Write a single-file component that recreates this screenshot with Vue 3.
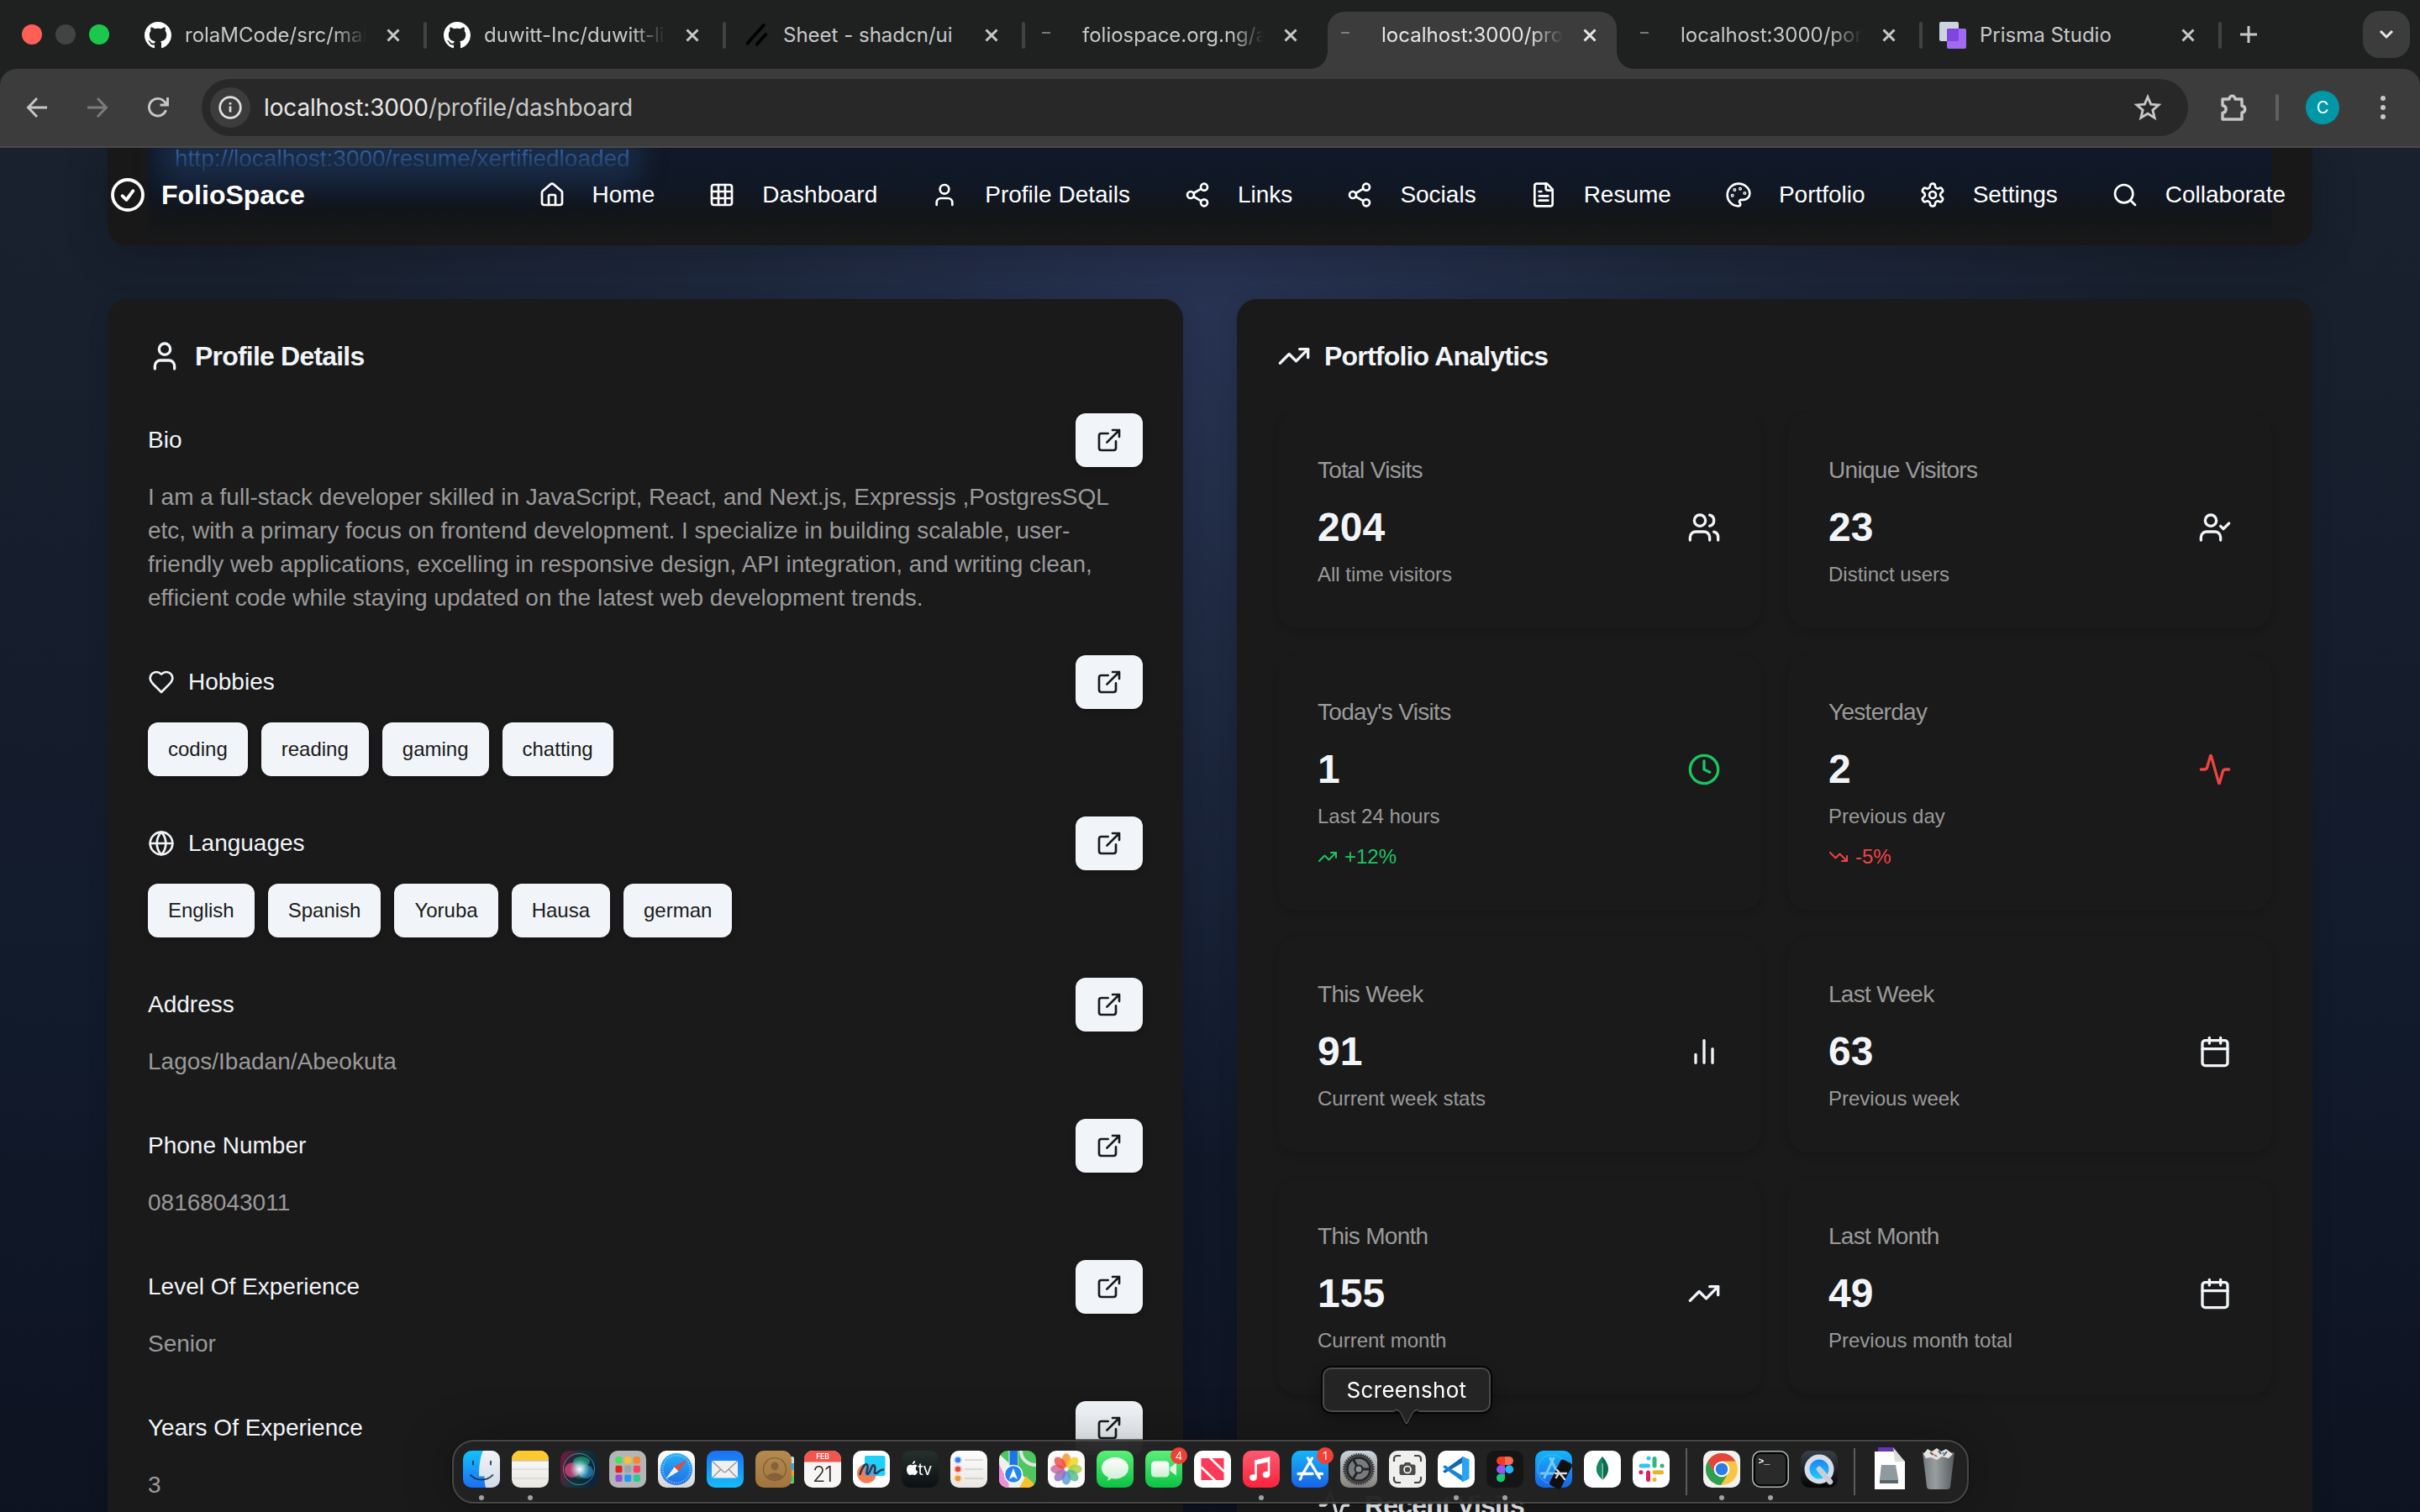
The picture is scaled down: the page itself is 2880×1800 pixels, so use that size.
<script setup>
const lucide = {
  home: '<path d="M15 21v-8a1 1 0 0 0-1-1h-4a1 1 0 0 0-1 1v8"/><path d="M3 10a2 2 0 0 1 .709-1.528l7-5.999a2 2 0 0 1 2.582 0l7 5.999A2 2 0 0 1 21 10v9a2 2 0 0 1-2 2H5a2 2 0 0 1-2-2z"/>',
  grid: '<rect width="18" height="18" x="3" y="3" rx="2"/><path d="M3 9h18M3 15h18M9 3v18M15 3v18"/>',
  user: '<path d="M19 21v-2a4 4 0 0 0-4-4H9a4 4 0 0 0-4 4v2"/><circle cx="12" cy="7" r="4"/>',
  share: '<circle cx="18" cy="5" r="3"/><circle cx="6" cy="12" r="3"/><circle cx="18" cy="19" r="3"/><path d="m8.59 13.51 6.83 3.98M15.41 6.51l-6.82 3.98"/>',
  file: '<path d="M15 2H6a2 2 0 0 0-2 2v16a2 2 0 0 0 2 2h12a2 2 0 0 0 2-2V7Z"/><path d="M14 2v4a2 2 0 0 0 2 2h4M10 9H8M16 13H8M16 17H8"/>',
  palette: '<circle cx="13.5" cy="6.5" r=".5"/><circle cx="17.5" cy="10.5" r=".5"/><circle cx="8.5" cy="7.5" r=".5"/><circle cx="6.5" cy="12.5" r=".5"/><path d="M12 2C6.5 2 2 6.5 2 12s4.5 10 10 10c.926 0 1.648-.746 1.648-1.688 0-.437-.18-.835-.437-1.125-.29-.289-.438-.652-.438-1.125a1.64 1.64 0 0 1 1.668-1.668h1.996c3.051 0 5.555-2.503 5.555-5.554C21.965 6.012 17.461 2 12 2z"/>',
  settings: '<path d="M12.22 2h-.44a2 2 0 0 0-2 2v.18a2 2 0 0 1-1 1.73l-.43.25a2 2 0 0 1-2 0l-.15-.08a2 2 0 0 0-2.73.73l-.22.38a2 2 0 0 0 .73 2.73l.15.1a2 2 0 0 1 1 1.72v.51a2 2 0 0 1-1 1.74l-.15.09a2 2 0 0 0-.73 2.73l.22.38a2 2 0 0 0 2.73.73l.15-.08a2 2 0 0 1 2 0l.43.25a2 2 0 0 1 1 1.73V20a2 2 0 0 0 2 2h.44a2 2 0 0 0 2-2v-.18a2 2 0 0 1 1-1.73l.43-.25a2 2 0 0 1 2 0l.15.08a2 2 0 0 0 2.73-.73l.22-.39a2 2 0 0 0-.73-2.73l-.15-.08a2 2 0 0 1-1-1.74v-.5a2 2 0 0 1 1-1.74l.15-.09a2 2 0 0 0 .73-2.73l-.22-.38a2 2 0 0 0-2.73-.73l-.15.08a2 2 0 0 1-2 0l-.43-.25a2 2 0 0 1-1-1.73V4a2 2 0 0 0-2-2z"/><circle cx="12" cy="12" r="3"/>',
  search: '<circle cx="11" cy="11" r="8"/><path d="m21 21-4.3-4.3"/>',
  link: '<path d="M15 3h6v6M10 14 21 3M18 13v6a2 2 0 0 1-2 2H5a2 2 0 0 1-2-2V8a2 2 0 0 1 2-2h6"/>',
  heart: '<path d="M19 14c1.49-1.46 3-3.21 3-5.5A5.5 5.5 0 0 0 16.5 3c-1.76 0-3 .5-4.5 2-1.5-1.5-2.74-2-4.5-2A5.5 5.5 0 0 0 2 8.5c0 2.3 1.5 4.05 3 5.5l7 7Z"/>',
  globe: '<circle cx="12" cy="12" r="10"/><path d="M12 2a14.5 14.5 0 0 0 0 20 14.5 14.5 0 0 0 0-20M2 12h20"/>',
  up: '<path d="m22 7-8.5 8.5-5-5L2 17"/><path d="M16 7h6v6"/>',
  down: '<path d="m22 17-8.5-8.5-5 5L2 7"/><path d="M16 17h6v-6"/>',
  users: '<path d="M16 21v-2a4 4 0 0 0-4-4H6a4 4 0 0 0-4 4v2"/><circle cx="9" cy="7" r="4"/><path d="M22 21v-2a4 4 0 0 0-3-3.87M16 3.13a4 4 0 0 1 0 7.75"/>',
  usercheck: '<path d="M16 21v-2a4 4 0 0 0-4-4H6a4 4 0 0 0-4 4v2"/><circle cx="9" cy="7" r="4"/><path d="m16 11 2 2 4-4"/>',
  clock: '<circle cx="12" cy="12" r="10"/><path d="M12 6v6l4 2"/>',
  activity: '<path d="M22 12h-2.48a2 2 0 0 0-1.93 1.46l-2.35 8.36a.25.25 0 0 1-.48 0L9.24 2.18a.25.25 0 0 0-.48 0l-2.35 8.36A2 2 0 0 1 4.49 12H2"/>',
  bars: '<path d="M18 20V10M12 20V4M6 20v-6"/>',
  calendar: '<path d="M8 2v4M16 2v4"/><rect width="18" height="18" x="3" y="4" rx="2"/><path d="M3 10h18"/>',
}

const github = '<path fill="#fff" d="M8 0C3.58 0 0 3.58 0 8c0 3.54 2.29 6.53 5.47 7.59.4.07.55-.17.55-.38 0-.19-.01-.82-.01-1.49-2.01.37-2.53-.49-2.69-.94-.09-.23-.48-.94-.82-1.13-.28-.15-.68-.52-.01-.53.63-.01 1.08.58 1.23.82.72 1.21 1.87.87 2.33.66.07-.52.28-.87.51-1.07-1.78-.2-3.64-.89-3.64-3.95 0-.87.31-1.59.82-2.15-.08-.2-.36-1.02.08-2.12 0 0 .67-.21 2.2.82.64-.18 1.32-.27 2-.27s1.36.09 2 .27c1.53-1.04 2.2-.82 2.2-.82.44 1.1.16 1.92.08 2.12.51.56.82 1.27.82 2.15 0 3.07-1.87 3.75-3.65 3.95.29.25.54.73.54 1.48 0 1.07-.01 1.93-.01 2.2 0 .21.15.46.55.38A8.01 8.01 0 0 0 16 8c0-4.42-3.58-8-8-8z"/>'
const slashes = '<path d="M2.800 12.800 12.400 2M8.400 13.400l5.200-5.900" stroke="#000" stroke-width="1.900" stroke-linecap="round"/>'
const dash = '<path d="M0 6.500h5" stroke="#8d8f98" stroke-width=".8"/>'
const prisma = '<rect width="11.500" height="11.500" rx="1" fill="#cad5e0"/><rect x="4.500" y="4" width="11.500" height="12" rx="1" fill="#9f6bf0"/><path d="M4.500 5a1 1 0 0 1 1-1h6v6.500a1 1 0 0 1-1 1h-6z" fill="#7f45dc"/>'

const tabs = [
  { title: 'rolaMCode/src/main', icon: github, sep: true, fade: true },
  { title: 'duwitt-Inc/duwitt-li', icon: github, sep: true, fade: true },
  { title: 'Sheet - shadcn/ui', icon: slashes, sep: true },
  { title: 'foliospace.org.ng/a', icon: dash, fade: true },
  { title: 'localhost:3000/pro', icon: dash, active: true, fade: true },
  { title: 'localhost:3000/por', icon: dash, sep: true, fade: true },
  { title: 'Prisma Studio', icon: prisma, sep: true },
]

const nav = [
  ['Home', 'home'], ['Dashboard', 'grid'], ['Profile Details', 'user'], ['Links', 'share'],
  ['Socials', 'share'], ['Resume', 'file'], ['Portfolio', 'palette'], ['Settings', 'settings'], ['Collaborate', 'search'],
]

const sections = [
  { title: 'Bio', text: 'I am a full-stack developer skilled in JavaScript, React, and Next.js, Expressjs ,PostgresSQL etc, with a primary focus on frontend development. I specialize in building scalable, user-friendly web applications, excelling in responsive design, API integration, and writing clean, efficient code while staying updated on the latest web development trends.' },
  { title: 'Hobbies', icon: 'heart', chips: ['coding', 'reading', 'gaming', 'chatting'] },
  { title: 'Languages', icon: 'globe', chips: ['English', 'Spanish', 'Yoruba', 'Hausa', 'german'] },
  { title: 'Address', text: 'Lagos/Ibadan/Abeokuta' },
  { title: 'Phone Number', text: '08168043011' },
  { title: 'Level Of Experience', text: 'Senior' },
  { title: 'Years Of Experience', text: '3' },
]

const stats = [
  { title: 'Total Visits', value: '204', sub: 'All time visitors', icon: 'users' },
  { title: 'Unique Visitors', value: '23', sub: 'Distinct users', icon: 'usercheck' },
  { title: "Today's Visits", value: '1', sub: 'Last 24 hours', icon: 'clock', tone: 'green', trend: '+12%', dir: 'up' },
  { title: 'Yesterday', value: '2', sub: 'Previous day', icon: 'activity', tone: 'red', trend: '-5%', dir: 'down' },
  { title: 'This Week', value: '91', sub: 'Current week stats', icon: 'bars' },
  { title: 'Last Week', value: '63', sub: 'Previous week', icon: 'calendar' },
  { title: 'This Month', value: '155', sub: 'Current month', icon: 'up' },
  { title: 'Last Month', value: '49', sub: 'Previous month total', icon: 'calendar' },
]

const tile = (fill) => `<rect width="44" height="44" rx="10" fill="${fill}"/>`
const padColors = ['#4be05a', '#fbc02d', '#f7882a', '#e0241c', '#9aa4aa', '#ff3f5f', '#9a4bd8', '#1c9cf6', '#2fc995']
const pad = padColors.map((c, i) => `<rect x="${7.5 + (i % 3) * 10.7}" y="${7 + Math.floor(i / 3) * 10.8}" width="8" height="8.4" rx="2" fill="${c}"/>`).join('')
const petals = ['#f7941d', '#f2cf1d', '#a8cf3c', '#4fb98a', '#5a9bd8', '#8a6fc0', '#c9649a', '#f0493e']
  .map((c, i) => `<ellipse cx="22" cy="11.5" rx="5.4" ry="8.3" fill="${c}" fill-opacity=".82" transform="rotate(${i * 45} 22 22)"/>`).join('')
const ticks = Array.from({ length: 36 }, (_, i) => `<path d="M22 4.6v2" stroke="#cfe8fb" stroke-width=".7" transform="rotate(${i * 10} 22 22)"/>`).join('')
const teeth = Array.from({ length: 40 }, (_, i) => `<path d="M22 3v3" stroke="#333" stroke-width="1.4" transform="rotate(${i * 9} 22 22)"/>`).join('')

const dockMain = [
  { dot: true, art: tile('url(#g-finder)') + '<path d="M24 0h10a10 10 0 0 1 10 10v24a10 10 0 0 1-10 10h-7c-1.200-5-1.500-9-1.500-13.500h-6.500C19 18 20.500 7 24 0z" fill="url(#g-face)"/><path d="M12 12.500v4M33 12.500v4M9 29c7 7.500 19 7.500 26.500 0" stroke="#1d2b3e" stroke-width="1.700" fill="none" stroke-linecap="round"/>' },
  { dot: true, art: tile('url(#g-paper)') + '<path d="M0 11.500V10A10 10 0 0 1 10 0h24a10 10 0 0 1 10 10v1.500z" fill="#fdc92e"/><path d="M0 12h44" stroke="#b9a878"/><path d="M0 22h44M0 33h44" stroke="#d2d0cb"/>' },
  { art: tile('url(#g-siri)') + '<circle cx="22" cy="22" r="18.500" fill="#0b2636" fill-opacity=".4" stroke="#7fa8a8" stroke-opacity=".7"/><ellipse cx="14" cy="23" rx="9" ry="9" fill="#e8407f" fill-opacity=".75"/><ellipse cx="30" cy="25" rx="9" ry="8" fill="#2b9be0" fill-opacity=".6"/><ellipse cx="25" cy="13" rx="10" ry="6" fill="#2ccf9a" fill-opacity=".5"/><circle cx="23" cy="22" r="12" fill="url(#g-glow)"/>' },
  { art: tile('#b3b5b7') + pad },
  { art: tile('url(#g-white)') + '<circle cx="22" cy="22" r="19" fill="url(#g-safari)"/>' + ticks + '<path d="M35 10 24.500 24.500 19.500 19.500z" fill="#f0443c"/><path d="M9 34 19.500 19.500l5 5z" fill="#f4f4f4"/>' },
  { art: tile('url(#g-mail)') + '<rect x="6" y="12" width="31" height="20.500" rx="2" fill="#f0f0ef"/><path d="m7 13 13 12q1.500 1.300 3 0L36 13M7 32l10-10M36 32 26 22" fill="none" stroke="#8c9093" stroke-width="1.100"/>' },
  { art: '<rect x="38" y="7" width="8" height="32" rx="2" fill="#d8d8d8"/><path d="M38 15h8v8h-8z" fill="#2fa8e8"/><path d="M38 23h8v7h-8z" fill="#f29b38"/><path d="M38 30h8v8h-8z" fill="#4ccc5c"/><rect width="43" height="44" rx="10" fill="url(#g-book)"/><circle cx="23" cy="22" r="13.500" fill="none" stroke="#7e5c2e" stroke-width="1.200"/><ellipse cx="23" cy="18.500" rx="4.500" ry="5" fill="#85623a"/><path d="M13.500 31c3-6 16-6 19 0a13.500 13.500 0 0 1-19 0z" fill="#85623a"/>' },
  { art: tile('#f7f6f4') + '<path d="M0 13.500V10A10 10 0 0 1 10 0h24a10 10 0 0 1 10 10v3.500z" fill="#f0564d"/><text x="22" y="10.400" font-size="8.500" font-weight="600" text-anchor="middle" fill="#fff" font-family="Inter, sans-serif">FEB</text><text x="21.500" y="36.500" font-size="25" font-weight="300" letter-spacing="-1" text-anchor="middle" fill="#2a2a2a" font-family="Inter, sans-serif">21</text>' },
  { art: tile('#fff') + '<circle cx="16.500" cy="27" r="11.500" fill="#f97a50"/><rect x="14" y="6" width="24.500" height="24" rx="2" fill="#20d0f7"/><path d="M14 16h14v12a11 11 0 0 1-11 2h-3z" fill="#6f9fc0"/><path d="M8.500 28c4-12 8-14 9-10s-3 10 0 10 5-14 8-10-2 9 1.500 9 3-4 9-4.500" fill="none" stroke="#153c60" stroke-width="2.400" stroke-linecap="round"/>' },
  { art: tile('url(#g-tv)') + '<path d="M15.800 16.500c1.600 0 2.300.8 2.800 1.500-2.700 1.800-2.200 5.800.7 6.800-.8 2.400-2.500 4.400-4 4.200-1-.2-1.400-.6-2.600-.6s-1.700.5-2.700.6C7.500 29 5.800 24.700 6 22c.2-3.400 2.300-5.200 4.500-5.200 1.100 0 2 .7 2.800.7.700 0 1.600-1 2.500-1z" fill="#fff"/><path d="M12.800 16c0-2.200 1.700-3.900 3.400-4 .2 2.100-1.500 4-3.400 4z" fill="#fff"/><text x="19.500" y="28.500" font-size="19" fill="#fff" font-family="Inter, sans-serif" letter-spacing="-.6">tv</text>' },
  { art: tile('url(#g-paper)') + [['#2f80f6', 11], ['#e8453c', 22], ['#f2962c', 33]].map(([c, y]) => `<circle cx="9" cy="${y}" r="3.300" fill="${c}"/><circle cx="9" cy="${y}" r="4.400" fill="none" stroke="${c}" stroke-opacity=".4" stroke-width=".8"/><path d="M17 ${y}h22" stroke="#bcbcba" stroke-width="1"/>`).join('') },
  { art: '<g clip-path="url(#clip-tile)"><rect width="44" height="44" fill="#4fc75f"/><path d="M0 4 44 44H0z" fill="#f0eff0"/><path d="M0 16v28h14z" fill="#ee8fd8"/><path d="M24 44 32 30l12 12v2z" fill="#f7c02e"/><path d="M11.500 0h11v44h-11z" fill="#eef0f2"/><path d="M12.500 0h9.500v20h-9.500z" fill="#1c74e8"/><path d="M26 0c0 10 8 17 18 17" fill="none" stroke="#e2e4e6" stroke-width="4"/></g><circle cx="17" cy="28" r="10.500" fill="#2484f2" stroke="#fff" stroke-width="1.400"/><path d="m17 21 5 13-5-3-5 3z" fill="#fff"/>' },
  { art: tile('#fbfbfb') + petals },
  { art: tile('url(#g-green)') + '<path d="M22 8c9 0 16 5.600 16 12.700S31 33.500 22 33.500c-1.600 0-3-.2-4.400-.5-1.300 1.500-3.300 2.600-5.300 2.700 1-1 1.600-2.400 1.700-4C9 29.200 6 25.400 6 20.700 6 13.600 13 8 22 8z" fill="url(#g-bubble)"/>' },
  { badge: '4', art: tile('url(#g-green)') + '<rect x="7" y="12.500" width="21.500" height="19" rx="4.500" fill="url(#g-bubble)"/><path d="M29.500 20 37 14.500v15L29.500 24z" fill="#e8f4ea"/>' },
  { art: tile('#fff') + '<rect x="8.500" y="9" width="27" height="26" fill="#fb3958"/><path d="M8.500 19.500 25 35.500M19 8.500l17 16.500" stroke="#fff" stroke-width="2.600"/>' },
  { dot: true, art: tile('url(#g-music)') + '<path d="M15.500 31V12.500L31 9v18.500" fill="none" stroke="#fff" stroke-width="2.600"/><path d="M14.500 11.500 32 7.500v5.500l-17.500 4z" fill="#fff"/><ellipse cx="12.500" cy="32" rx="4.300" ry="3.700" fill="#fff"/><ellipse cx="28" cy="28.500" rx="4.300" ry="3.700" fill="#fff"/>' },
  { badge: '1', art: tile('url(#g-store)') + '<path d="m24.500 9-12 20M19.500 9l14 23.500M8 27.500h17M30 27.500h6.500M11.500 32l-1.200 2" stroke="#fff" stroke-width="3.300" stroke-linecap="round"/>' },
  { art: tile('url(#g-set)') + '<circle cx="22" cy="22" r="17.500" fill="#4a4d50"/>' + teeth + '<circle cx="22" cy="22" r="13.500" fill="#777b7e" stroke="#232527" stroke-width="2.400"/><path d="M22 22h13M22 22l-6.500 11.500M22 22 15.500 10.500" stroke="#232527" stroke-width="3"/><circle cx="22" cy="22" r="4.500" fill="#8d9194" stroke="#232527" stroke-width="2"/>' },
  { art: tile('#efefed') + '<path d="M6 13V9.500A3.500 3.500 0 0 1 9.500 6H14M30 6h4.500A3.500 3.500 0 0 1 38 9.500V13M38 31v3.500a3.500 3.500 0 0 1-3.500 3.500H30M14 38H9.500A3.500 3.500 0 0 1 6 34.500V31" fill="none" stroke="#464646" stroke-width="2.200"/><path d="M14.500 16.500h3l1.500-2.500h6l1.500 2.500h3a2 2 0 0 1 2 2V27a2 2 0 0 1-2 2h-15a2 2 0 0 1-2-2v-8.500a2 2 0 0 1 2-2z" fill="#4a4a4a"/><circle cx="22" cy="22.500" r="4" fill="none" stroke="#fff" stroke-width="1.600"/>' },
  { dot: true, art: tile('#fff') + '<path d="M30 7 9 25.500l-3-2.300v-2.500L8.500 19 30 37z" fill="none"/><path d="m6 24.500 2.500 2.300L30 14V7z" fill="#1267ad"/><path d="m6 19.500 2.500-2.300L30 30v7z" fill="#1a86d2"/><path d="m29 6.500 8.500 4v23l-8.500 4z" fill="#2aa3f0"/>' },
  { dot: true, art: tile('#151515') + '<path d="M17 7h5v10h-5a5 5 0 0 1 0-10z" fill="#f23a24"/><path d="M22 7h5a5 5 0 0 1 0 10h-5z" fill="#fb6b4f"/><path d="M17 17.200h5v10h-5a5 5 0 0 1 0-10z" fill="#9a53f8"/><circle cx="27.200" cy="22.200" r="5" fill="#20b4f8"/><path d="M17 27.400h5v5a5 5 0 1 1-5-5z" fill="#17c772"/>' },
  { art: tile('url(#g-store)') + '<circle cx="20" cy="22" r="17" fill="none" stroke="#5cc3ff" stroke-opacity=".7"/><path d="m22 9-11 23M18 9l10 20M7 27h20" stroke="#8fd4ff" stroke-width="3" stroke-opacity=".8" stroke-linecap="round"/><rect x="23" y="11" width="15" height="34" rx="3" fill="#0f0f10" transform="rotate(27 30 28)"/><path d="m26 23 9 11M24 27h13M28 27l-3 5" stroke="#d8dade" stroke-width="2.400" stroke-linecap="round"/>' },
  { art: tile('#fff') + '<path d="M22 7c5 5.500 7 10.500 7 15s-2.500 9-6.500 12.500C18 31 15 27 15 22S17.500 12 22 7z" fill="#0b6b4c"/><path d="M22 7c-4.500 5-7 10-7 15s3 9 7 12z" fill="#148a5c"/><path d="M22.200 15v21" stroke="#cfe0d6" stroke-width="1"/>' },
  { art: tile('#fff') + '<g stroke-width="5" stroke-linecap="round"><path d="M19 9v.1M10 18h8.500" stroke="#36c5f0"/><path d="M26 9.500V18M35 18h.1" stroke="#2eb67d"/><path d="M26 25.700h8.500M26 34.500v.1" stroke="#ecb22e"/><path d="M18.500 26v8.500M9.800 25.700h.1" stroke="#e01e5a"/></g>' },
]
const dockRecent = [
  { dot: true, art: tile('#f2f2f0') + '<circle cx="22" cy="22" r="19" fill="#f9c642"/><path d="M5.500 12.500A19 19 0 0 1 38.500 12.500H22l-8.500 14z" fill="#e5443a"/><path d="M5.500 12.500A19 19 0 0 0 21 41l9.500-15.500-8.500 5-8-4z" fill="#2f9e4f"/><circle cx="22" cy="22" r="9.300" fill="#fff"/><circle cx="22" cy="22" r="7.300" fill="#2d7de9"/>' },
  { dot: true, art: '<rect x=".8" y=".8" width="42.400" height="42.400" rx="9.500" fill="#040404" stroke="#a9b5b8" stroke-width="1.600"/><rect x="4" y="4" width="36" height="36" rx="6" fill="#2a2a2b"/><text x="7.500" y="15.500" font-size="11.500" font-weight="700" fill="#fff" font-family="Liberation Mono, monospace">&gt;_</text>' },
  { art: tile('url(#g-dark)') + '<circle cx="22" cy="22" r="14.500" fill="url(#g-qt)" stroke="#d5dee8" stroke-width="6"/><path d="m22 22 13 15" stroke="#c9ced6" stroke-width="6.500" stroke-linecap="round"/>' },
]
const dockFiles = [
  { art: '<path d="M8-4h18v8H8z" fill="#6535b8"/><path d="M4 1h24l12 12v33H4z" fill="#fdfdfd"/><path d="M26-4 40 13H28z" fill="#dcdcdc"/><path d="M12 17h17l3 17v5H10v-5z" fill="#8f9a9e"/><path d="M10 35h22v4H10z" fill="#59636a"/>' },
  { art: '<path d="M3 2h38l-5 41q-.5 3-4 3H12q-3.500 0-4-3z" fill="url(#g-trash)" fill-opacity=".9"/><path d="m4 4 5-6 5 3 6-4 5 4 6-3 8 6-5 5-8-2-6 4-7-3-6 1z" fill="#e4e4e2"/><path d="m12 2 4 3M22 0l3 4M32 1l-4 5" stroke="#555" stroke-width="2"/><path d="m17 5 3 2" stroke="#e55" stroke-width="2"/><path d="m27 2 2 3" stroke="#49c" stroke-width="2"/>' },
]
</script>

<template>
  <div class="screen">
    <header class="browser">
      <div class="tabstrip">
        <div class="lights"><i class="red-l" /><i class="gray-l" /><i class="green-l" /></div>
        <div class="tabs">
          <template v-for="t in tabs" :key="t.title">
            <div class="tab" :class="{ active: t.active }">
              <svg class="favicon" viewBox="0 0 16 16" fill="none" v-html="t.icon" />
              <span class="tab-title" :class="{ fade: t.fade }">{{ t.title }}</span>
              <svg class="close" viewBox="0 0 18 18"><path d="m2.500 2.500 13 13m0-13-13 13" /></svg>
            </div>
            <i class="sep" :class="{ on: t.sep }" />
          </template>
        </div>
        <svg class="plus" viewBox="0 0 22 22"><path d="M11 1v20M1 11h20" /></svg>
        <div class="tab-search"><svg viewBox="0 0 18 12"><path d="m2 2 7 7 7-7" /></svg></div>
      </div>
      <div class="toolbar">
        <svg class="tool" viewBox="0 0 24 24"><path d="M24 12H2M12 1 1.500 12 12 23" /></svg>
        <svg class="tool dim" viewBox="0 0 24 24"><path d="M0 12h22M12 1l10.500 11L12 23" /></svg>
        <svg class="tool" viewBox="0 0 24 24"><path d="M21.500 15A10.300 10.300 0 1 1 20 5.500l3 3M23.500 0v9h-9" /></svg>
        <div class="omnibox">
          <div class="info"><svg viewBox="0 0 28 28"><circle cx="14" cy="14" r="12.300" /><path d="M14 12.500v7M14 8v2.600" /></svg></div>
          <span class="url">localhost:3000<em>/profile/dashboard</em></span>
          <svg class="star" viewBox="0 0 32 32"><path d="m16 3.500 3.700 8.600 9.300.8-7.100 6.200 2.200 9.100-8.100-4.900-8.100 4.900 2.200-9.100L3 12.900l9.300-.8z" /></svg>
        </div>
        <svg class="puzzle" viewBox="0 0 36 36"><path d="M5 8h8c0-5 7-5 7 0h8v8c5 .5 5 7.500 0 8v8H5v-7.500c5.500-1 5.500-8 0-9z" /></svg>
        <i class="bar-sep" />
        <div class="avatar">C</div>
        <div class="dots"><i /><i /><i /></div>
      </div>
    </header>

    <main class="page">
      <section class="top-card">
        <div class="link-box">
          <span class="resume-glow" />
          <span class="resume-link">http://localhost:3000/resume/xertifiedloaded</span>
        </div>
      </section>

      <nav class="nav">
        <div class="brand">
          <svg viewBox="0 0 24 24"><path d="M8.800 12.600 11.200 15l4-5.400M21 12a9 9 0 1 1-18 0 9 9 0 0 1 18 0z" /></svg>
          FolioSpace
        </div>
        <div class="menu">
          <a v-for="[label, icon] in nav" :key="label">
            <svg class="lu s32" viewBox="0 0 24 24" v-html="lucide[icon]" />{{ label }}
          </a>
        </div>
      </nav>

      <div class="columns">
        <section class="panel">
          <h2><svg class="lu s40" viewBox="0 0 24 24" v-html="lucide.user" />Profile Details</h2>
          <div v-for="s in sections" :key="s.title" class="section">
            <div class="section-head">
              <h3><svg v-if="s.icon" class="lu s32" viewBox="0 0 24 24" v-html="lucide[s.icon]" />{{ s.title }}</h3>
              <button><svg class="lu s32" viewBox="0 0 24 24" v-html="lucide.link" /></button>
            </div>
            <p v-if="s.text">{{ s.text }}</p>
            <div v-else class="chips"><span v-for="c in s.chips" :key="c">{{ c }}</span></div>
          </div>
        </section>

        <section class="panel">
          <h2><svg class="lu s40" viewBox="0 0 24 24" v-html="lucide.up" />Portfolio Analytics</h2>
          <div class="stats">
            <article v-for="s in stats" :key="s.title" class="stat">
              <h4>{{ s.title }}</h4>
              <div class="value-row">
                <strong>{{ s.value }}</strong>
                <svg class="lu s40" :class="s.tone" viewBox="0 0 24 24" v-html="lucide[s.icon]" />
              </div>
              <small>{{ s.sub }}</small>
              <div v-if="s.trend" class="trend" :class="s.tone">
                <svg class="lu s24" viewBox="0 0 24 24" v-html="lucide[s.dir]" />{{ s.trend }}
              </div>
            </article>
          </div>
          <div class="recent">
            <h2><svg class="lu s40" viewBox="0 0 24 24" v-html="lucide.activity" />Recent Visits</h2>
          </div>
        </section>
      </div>
    </main>

    <div class="tooltip">Screenshot<svg viewBox="0 0 28 18"><path d="M0 0c5 0 7 3 9 8l4 8q1 1.500 2 0l4-8c2-5 4-8 9-8" /></svg></div>

    <footer class="dock">
      <template v-for="(group, g) in [dockMain, dockRecent, dockFiles]" :key="g">
        <i v-if="g" class="dock-sep" />
        <div v-for="(d, i) in group" :key="i" class="app">
          <svg viewBox="0 0 44 44" v-html="d.art" />
          <b v-if="d.badge">{{ d.badge }}</b>
          <i v-if="d.dot" />
        </div>
      </template>
    </footer>

    <svg class="defs" width="0" height="0">
      <defs>
        <clipPath id="clip-tile"><rect width="44" height="44" rx="10" /></clipPath>
        <linearGradient id="g-finder" x2="0" y2="1"><stop stop-color="#12c3fb" /><stop offset="1" stop-color="#1b6ff2" /></linearGradient>
        <linearGradient id="g-face" x2="0" y2="1"><stop stop-color="#f3f4f6" /><stop offset="1" stop-color="#cfdbe8" /></linearGradient>
        <linearGradient id="g-paper" x2="0" y2="1"><stop stop-color="#fdfdfd" /><stop offset="1" stop-color="#e9e7e2" /></linearGradient>
        <linearGradient id="g-white" x2="0" y2="1"><stop stop-color="#fff" /><stop offset="1" stop-color="#d6d6d6" /></linearGradient>
        <linearGradient id="g-dark" x2="0" y2="1"><stop stop-color="#3a4048" /><stop offset="1" stop-color="#050506" /></linearGradient>
        <linearGradient id="g-siri" x2="1" y2=".3"><stop stop-color="#7d1440" /><stop offset=".6" stop-color="#0c3a3c" /><stop offset="1" stop-color="#0a2540" /></linearGradient>
        <radialGradient id="g-glow"><stop stop-color="#fff" /><stop offset=".3" stop-color="#dff4ff" stop-opacity=".8" /><stop offset="1" stop-color="#9fe" stop-opacity="0" /></radialGradient>
        <linearGradient id="g-safari" x2="0" y2="1"><stop stop-color="#25b0f7" /><stop offset="1" stop-color="#1f6fe4" /></linearGradient>
        <linearGradient id="g-mail" x2="0" y2="1"><stop stop-color="#1d6ff2" /><stop offset="1" stop-color="#14bdfb" /></linearGradient>
        <linearGradient id="g-book" x2="0" y2="1"><stop stop-color="#b48a50" /><stop offset="1" stop-color="#a2743f" /></linearGradient>
        <linearGradient id="g-tv" x2="0" y2="1"><stop stop-color="#26302c" /><stop offset="1" stop-color="#0b1113" /></linearGradient>
        <linearGradient id="g-green" x2="0" y2="1"><stop stop-color="#5cf078" /><stop offset="1" stop-color="#0cc244" /></linearGradient>
        <linearGradient id="g-bubble" x2="0" y2="1"><stop stop-color="#fff" /><stop offset="1" stop-color="#cdeed3" /></linearGradient>
        <linearGradient id="g-music" x2="0" y2="1"><stop stop-color="#fb5b73" /><stop offset="1" stop-color="#fa233b" /></linearGradient>
        <linearGradient id="g-store" x2="0" y2="1"><stop stop-color="#15b5f8" /><stop offset="1" stop-color="#1a63e6" /></linearGradient>
        <linearGradient id="g-set" x2="0" y2="1"><stop stop-color="#c9d6dd" /><stop offset="1" stop-color="#85817c" /></linearGradient>
        <linearGradient id="g-qt" x2="0" y2="1"><stop stop-color="#1a7df0" /><stop offset="1" stop-color="#22d3fb" /></linearGradient>
        <linearGradient id="g-trash" x2="1" y2="0"><stop stop-color="#7b8286" /><stop offset=".4" stop-color="#a5abae" /><stop offset="1" stop-color="#5c6266" /></linearGradient>
      </defs>
    </svg>
  </div>
</template>

<style>
html, body { margin: 0; background: #0e1322; overflow: hidden; }
</style>

<style scoped>
* { box-sizing: border-box; }
h2, h3, h4, p { margin: 0; font-weight: 400; }
.screen { position: relative; width: 2880px; height: 1800px; overflow: hidden; display: flex; flex-direction: column; font-family: "Liberation Sans", Arial, sans-serif; color: #fff; }
svg { display: block; flex: none; overflow: visible; }
.defs { position: absolute; }

.browser { flex: none; background: #1f2121; font-family: Inter, sans-serif; position: relative; z-index: 3; }
.tabstrip { height: 82px; display: flex; align-items: center; padding: 0 12px 0 26px; }
.lights { display: flex; gap: 16px; width: 130px; }
.lights i { width: 24px; height: 24px; border-radius: 50%; }
.red-l { background: #ff5f57; }
.gray-l { background: #434343; }
.green-l { background: #1cc84b; }
.tabs { display: flex; align-items: center; }
.tab { width: 344px; height: 82px; padding: 0 22px 0 16px; display: flex; align-items: center; position: relative; color: #c7c8c8; }
.tab > * { position: relative; top: 1px; }
.tab.active { color: #e6e6e6; height: 68px; margin-top: 14px; border-radius: 20px 20px 0 0; background: #3c3c3c; }
.tab.active > * { top: -6px; }
.tab.active::before, .tab.active::after { content: ""; position: absolute; bottom: 0; width: 20px; height: 20px; }
.tab.active::before { left: -20px; background: radial-gradient(circle at 0 0, transparent 19.500px, #3c3c3c 20px); }
.tab.active::after { right: -20px; background: radial-gradient(circle at 100% 0, transparent 19.500px, #3c3c3c 20px); }
.favicon { width: 32px; height: 32px; margin-right: 16px; }
.tab-title { width: 216px; margin-right: 23px; overflow: hidden; white-space: nowrap; font-size: 24px; line-height: 32px; letter-spacing: 0; }
.tab-title.fade { -webkit-mask-image: linear-gradient(90deg, #000 82%, transparent 100%); mask-image: linear-gradient(90deg, #000 82%, transparent 100%); }
.close { width: 18px; height: 18px; }
.close path, .plus path, .tab-search path { fill: none; stroke: currentColor; stroke-width: 3; }
.sep { width: 4px; height: 32px; margin: 2px 4px 0; border-radius: 2px; }
.sep.on { background: #414343; }
.plus { width: 22px; height: 22px; margin-left: 17px; color: #c7c8c8; }
.tab-search { width: 56px; height: 56px; margin-left: auto; border-radius: 20px; background: #3c3c3c; display: grid; place-items: center; }
.tab-search svg { width: 18px; height: 12px; color: #e6e6e6; }
.toolbar { height: 94px; background: #3c3c3c; border-radius: 20px 20px 0 0; border-bottom: 2px solid #4a4a4a; display: flex; align-items: center; padding: 0 41px 0 32px; }
.tool { width: 24px; height: 24px; margin-right: 48px; }
.tool path { fill: none; stroke: #c7c7c7; stroke-width: 2.900; }
.tool.dim path { stroke: #7c7c7c; }
.omnibox { width: 2364px; height: 68px; margin-left: -8px; padding: 0 32px 0 10px; border-radius: 34px; background: #282828; display: flex; align-items: center; }
.info { width: 48px; height: 48px; border-radius: 50%; background: #3c3c3c; display: grid; place-items: center; margin-right: 16px; }
.info svg { width: 28px; height: 28px; }
.info svg * { fill: none; stroke: #e0e0e0; stroke-width: 2.700; }
.url { flex: 1; font-size: 28px; letter-spacing: -.150px; color: #e8e8e8; }
.url em { font-style: normal; color: #c7c7c7; }
.star { width: 32px; height: 32px; }
.star path, .puzzle path { fill: none; stroke: #c7c7c7; stroke-width: 2.900; }
.puzzle { width: 36px; height: 36px; margin-left: 36px; }
.puzzle path { stroke-width: 3.400; stroke-linejoin: round; }
.bar-sep { width: 4px; height: 32px; border-radius: 2px; background: #5f5f5f; margin: 0 32px; }
.avatar { width: 40px; height: 40px; border-radius: 50%; background: #0097a7; display: grid; place-items: center; font-size: 20px; }
.dots { margin-left: auto; display: flex; flex-direction: column; gap: 5px; }
.dots i { width: 6px; height: 6px; border-radius: 50%; background: #c7c7c7; }

.page { position: relative; flex: 1; min-height: 0; overflow: hidden; padding: 0 128px; background: radial-gradient(ellipse 1150px 1000px at 1440px 190px, rgba(42, 54, 88, .85), rgba(36, 48, 78, .5) 45%, transparent 100%), linear-gradient(#19212e, #161e2d 35%, #111a2b 65%, #0e1321); }
.top-card { height: 116px; border-radius: 0 0 24px 24px; background: #181818; padding: 0 48px; overflow: hidden; box-shadow: 0 8px 50px rgba(12, 14, 20, .3); }
.link-box { position: relative; height: 116px; background: linear-gradient(#111827, #101725 40%, #131519 70%, rgba(24, 24, 24, 0) 95%); }
.resume-glow { position: absolute; left: 14px; top: -30px; width: 574px; height: 74px; border-radius: 20px; background: #1c3150; opacity: .75; filter: blur(15px); }
.resume-link { position: absolute; left: 32px; top: -4px; font-size: 28px; line-height: 34px; letter-spacing: 0; color: #33619f; -webkit-mask-image: linear-gradient(#000 20%, rgba(0, 0, 0, .3) 85%); mask-image: linear-gradient(#000 20%, rgba(0, 0, 0, .3) 85%); }
.nav { position: absolute; left: 128px; right: 160px; top: 0; height: 112px; display: flex; align-items: center; justify-content: space-between; }
.brand { display: flex; align-items: center; gap: 16px; font-size: 32px; font-weight: 700; }
.brand svg { width: 48px; height: 48px; }
.brand path { fill: none; stroke: #fff; stroke-width: 1.900; stroke-linecap: round; stroke-linejoin: round; }
.menu { display: flex; gap: 64px; font-size: 28px; }
.menu a { display: flex; align-items: center; gap: 32px; white-space: nowrap; }

.lu { fill: none; stroke: currentColor; stroke-width: 2; stroke-linecap: round; stroke-linejoin: round; }
.s24 { width: 24px; height: 24px; }
.s32 { width: 32px; height: 32px; }
.s40 { width: 40px; height: 40px; }

.columns { display: grid; grid-template-columns: 1fr 1fr; gap: 64px; margin-top: 64px; }
.panel { min-height: 1600px; padding: 48px; border-radius: 24px; background: #1a1a1a; box-shadow: 0 4px 24px rgba(10, 12, 20, .12); }
.panel h2 { display: flex; align-items: center; gap: 16px; height: 40px; margin-bottom: 48px; font-size: 32px; font-weight: 700; letter-spacing: -.8px; color: #f1f5f9; }
.section { margin-bottom: 48px; }
.section-head { height: 64px; margin-bottom: 16px; display: flex; align-items: center; justify-content: space-between; }
.section h3 { display: flex; align-items: center; gap: 16px; font-size: 28px; color: #f1f5f9; }
.section button { width: 80px; height: 64px; padding: 0; border: 0; border-radius: 12px; background: #f1f5f9; color: #1a1a1a; display: grid; place-items: center; box-shadow: 0 2px 6px rgba(0, 0, 0, .3); }
.section p { font-size: 28px; line-height: 40px; color: #9a9a9a; }
.chips { display: flex; gap: 16px; }
.chips span { height: 64px; padding: 0 24px; border-radius: 12px; background: #f1f5f9; color: #1a1a1a; font-size: 24px; line-height: 64px; box-shadow: 0 2px 6px rgba(0, 0, 0, .3); }
.stats { display: grid; grid-template-columns: 1fr 1fr; gap: 32px; }
.stat { padding: 48px; border-radius: 24px; background: #1a1a1a; box-shadow: 0 3px 8px rgba(0, 0, 0, .15); }
.stat h4 { font-size: 28px; line-height: 40px; letter-spacing: -.7px; color: #9a9a9a; }
.value-row { height: 64px; margin: 16px 0 8px; display: flex; align-items: center; justify-content: space-between; color: #f1f5f9; }
.value-row strong { font-size: 48px; line-height: 64px; }
.stat small { display: block; font-size: 24px; line-height: 32px; color: #9a9a9a; }
.trend { display: flex; align-items: center; gap: 8px; height: 32px; margin-top: 16px; font-size: 24px; }
.green { color: #1bc562; }
.red { color: #ef4444; }
.recent { margin-top: 64px; padding: 48px; border-radius: 24px; }

.tooltip { position: absolute; z-index: 5; left: 1574px; top: 1628px; width: 200px; height: 53px; border: 2px solid #4a4a4a; border-radius: 10px; background: #242424; box-shadow: 0 0 0 2px #050505, 0 6px 16px rgba(0, 0, 0, .4); font: 26px/49px Inter, sans-serif; letter-spacing: .3px; text-align: center; }
.tooltip svg { position: absolute; left: 84px; top: 48px; width: 28px; height: 18px; filter: drop-shadow(0 2px 0 #050505); }
.tooltip path { fill: #242424; stroke: #4a4a4a; stroke-width: 1.500; }
.dock { position: absolute; z-index: 4; left: 538px; top: 1714px; height: 76px; padding: 0 5px 0 4px; display: flex; border: 2px solid #474747; border-radius: 26px; background: rgba(34, 34, 34, .93); backdrop-filter: blur(30px); box-shadow: 0 0 0 1px rgba(0, 0, 0, .5), 0 0 60px rgba(0, 0, 0, .28); }
.app { position: relative; width: 58px; height: 72px; padding: 11px 7px 0; }
.app > svg { width: 44px; height: 44px; }
.app i { position: absolute; left: 26px; top: 64px; width: 6px; height: 6px; border-radius: 50%; background: #a0a0a0; }
.app b { position: absolute; left: 37px; top: 7px; width: 20px; height: 20px; border-radius: 50%; background: #ef4136; color: #fff; font: 400 13px/20px Inter, sans-serif; text-align: center; }
.dock-sep { width: 2px; height: 56px; margin: 8px 12px 0; background: #5c5c5c; }
</style>
